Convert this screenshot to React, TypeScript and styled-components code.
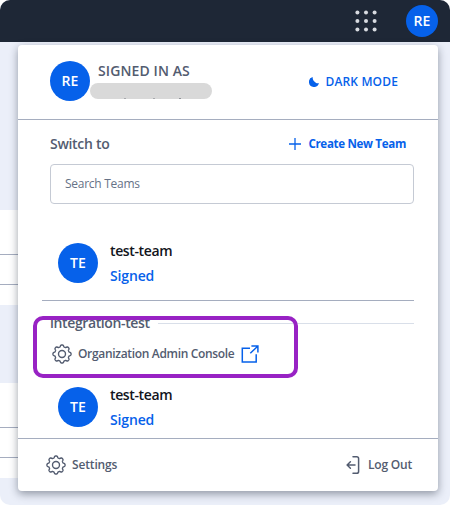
import React from 'react';
import styled, { createGlobalStyle } from 'styled-components';

const BLUE = '#0661ea';
const SLATE = '#535c70';
const LINE = '#a5adbf';

const GlobalStyle = createGlobalStyle`
  * { box-sizing: border-box; }
  body { margin: 0; background: #fff; }
`;

const Frame = styled.div`
  position: relative;
  width: 450px;
  height: 505px;
  overflow: hidden;
  border-radius: 10px;
  background: #ebeff9;
  font-family: 'Open Sans', 'Noto Sans', sans-serif;
  font-weight: 600;
`;

const TopBar = styled.header`
  display: flex;
  align-items: center;
  justify-content: flex-end;
  gap: 29px;
  height: 42px;
  padding-right: 12px;
  background: #1e2736;
`;

const Backdrop = styled.main`
  display: flex;
  flex-direction: column;
  gap: 78px;
  width: 300px;
  padding-top: 168px;
`;

const Card = styled.section`
  height: 95px;
  padding-top: 44px;
  background: #fff;
`;

const CardRow = styled.div`
  height: 30px;
  border-top: 1px solid ${LINE};
  &:last-child { height: 21px; }
`;

const Avatar = styled.div<{ $size: number }>`
  display: flex;
  flex: none;
  align-items: center;
  justify-content: center;
  width: ${(p) => p.$size}px;
  height: ${(p) => p.$size}px;
  border-radius: 50%;
  background: ${BLUE};
  color: #fff;
  font-size: 14px;
  letter-spacing: 0.2px;
  line-height: 20px;
`;

const Label = styled.span<{ $size?: number; $color?: string; $track?: number; $weight?: number }>`
  color: ${(p) => p.$color ?? SLATE};
  font-size: ${(p) => p.$size ?? 12}px;
  font-weight: ${(p) => p.$weight ?? 600};
  letter-spacing: ${(p) => p.$track ?? 0}px;
  line-height: 20px;
  white-space: nowrap;
`;

const Menu = styled.div`
  position: absolute;
  left: 18px;
  top: 45px;
  display: flex;
  flex-direction: column;
  width: 420px;
  height: 446px;
  border-radius: 4px;
  background: #fff;
  box-shadow: 0 3px 8px rgba(20, 28, 45, 0.42);
`;

const Account = styled.div`
  display: flex;
  height: 75px;
  padding: 16px 40px 0 32px;
  border-bottom: 1px solid ${LINE};
`;

const Identity = styled.div`
  display: flex;
  flex: 1;
  flex-direction: column;
  align-items: flex-start;
  & > span { margin-left: 8px; }
`;

const Redacted = styled.div`
  width: 122px;
  height: 16px;
  margin-top: 2px;
  border-radius: 8px;
  background: #d9d9d9;
`;

const Descenders = styled.svg`
  display: block;
  width: 122px;
  height: 16px;
`;

const Action = styled.button<{ $gap: number; $top?: number }>`
  display: flex;
  align-items: center;
  gap: ${(p) => p.$gap}px;
  height: 20px;
  margin: ${(p) => p.$top ?? 0}px 0 0;
  padding: 0;
  border: 0;
  background: none;
  font: inherit;
`;

const SwitchHead = styled.div`
  display: flex;
  justify-content: space-between;
  height: 44px;
  padding: 14px 32px 0;
`;

const Search = styled.div`
  display: flex;
  flex: none;
  align-items: center;
  height: 40px;
  margin: 0 24px 0 32px;
  padding-left: 14px;
  border: 1px solid #c5cad4;
  border-radius: 4px;
`;

const Team = styled.div<{ $top: number; $height: number; $line?: boolean }>`
  display: flex;
  gap: 12px;
  height: ${(p) => p.$height}px;
  margin: 0 24px;
  padding: ${(p) => p.$top}px 16px 0;
  border-bottom: ${(p) => (p.$line ? `1px solid ${LINE}` : '0')};
`;

const TeamText = styled.div`
  display: flex;
  flex-direction: column;
  gap: 5px;
  margin-top: -2px;
`;

const GroupHead = styled.div`
  display: flex;
  align-items: center;
  gap: 8px;
  height: 20px;
  margin: 12px 24px 0 32px;
  &::after {
    content: '';
    flex: 1;
    height: 1px;
    background: #d9dfe9;
  }
`;

const Console = styled.div`
  display: flex;
  align-items: center;
  height: 20px;
  margin: 11px 0 0 34px;
  & > span { width: 158px; margin: 0 5px 0 6px; }
`;

const Footer = styled.footer`
  display: flex;
  align-items: center;
  justify-content: space-between;
  height: 53px;
  padding: 0 26px 0 28px;
  border-top: 1px solid ${LINE};
`;

const Highlight = styled.div`
  position: absolute;
  left: 33px;
  top: 316px;
  width: 265px;
  height: 62px;
  border: 4px solid #9822c4;
  border-radius: 10px;
`;

const gearPath = (() => {
  const points: string[] = [];
  for (let i = 0; i < 160; i++) {
    const a = (i / 160) * Math.PI * 2;
    const r = 8.15 + 0.95 * Math.tanh(1.8 * Math.cos(8 * a));
    points.push(`${(10 + r * Math.sin(a)).toFixed(2)} ${(10 - r * Math.cos(a)).toFixed(2)}`);
  }
  return `M${points.join('L')}Z`;
})();

const Gear = () => (
  <svg width="20" height="20" viewBox="0 0 20 20" fill="none" stroke={SLATE} strokeWidth="1.4" strokeLinejoin="round">
    <path d={gearPath} />
    <circle cx="10" cy="10" r="3.5" />
  </svg>
);

const Apps = () => (
  <svg width="22" height="22" viewBox="0 0 22 22" fill="#d8dbe1">
    {[2.4, 11, 19.6].flatMap((y) => [2.4, 11, 19.6].map((x) => <circle key={`${x}-${y}`} cx={x} cy={y} r="2" />))}
  </svg>
);

const Moon = () => (
  <svg width="10" height="10" viewBox="0 0 10 10" fill={BLUE}>
    <path d="M3.7 0A5.1 5.1 0 1 0 10 6.1C8.2 6.6 6.7 6 6 5C4.5 4 3.4 2.4 3.7 0Z" />
  </svg>
);

const Plus = () => (
  <svg width="12" height="12" viewBox="0 0 12 12" fill="none" stroke={BLUE} strokeWidth="1.3">
    <path d="M6 0V12M0 6H12" />
  </svg>
);

const External = () => (
  <svg width="18" height="18" viewBox="0 0 18 18" fill="none" stroke={BLUE} strokeWidth="1.5">
    <path d="M9 3.2H1.3V16.9H15.2V9.2M10.4 1H16.9V7.4M16.7 1.2L9.3 8.2" />
  </svg>
);

const Exit = () => (
  <svg width="14" height="20" viewBox="0 0 14 20" fill="none" stroke={SLATE} strokeWidth="1.5" strokeLinecap="round" strokeLinejoin="round">
    <path d="M7 1.7H10.7Q12.6 1.7 12.6 3.6V16.4Q12.6 18.3 10.7 18.3H7M9 10H1.3M4.4 6.8L1.1 10L4.4 13.2" />
  </svg>
);

const TeamRow = (props: { top: number; height: number; line?: boolean }) => (
  <Team $top={props.top} $height={props.height} $line={props.line}>
    <Avatar $size={40}>TE</Avatar>
    <TeamText>
      <Label $size={14} $color="#12151c" $track={-0.38}>test-team</Label>
      <Label $size={14} $color={BLUE} $track={-0.15}>Signed</Label>
    </TeamText>
  </Team>
);

export default function App() {
  return (
    <>
      <GlobalStyle />
      <Frame>
        <TopBar>
          <Apps />
          <Avatar $size={32}>RE</Avatar>
        </TopBar>
        <Backdrop>
          <Card><CardRow /><CardRow /></Card>
          <Card><CardRow /><CardRow /></Card>
        </Backdrop>
        <Menu>
          <Account>
            <Avatar $size={40}>RE</Avatar>
            <Identity>
              <Label $size={14} $track={0.1}>SIGNED IN AS</Label>
              <Redacted>
                <Descenders viewBox="0 0 122 16" fill="#777b82">
                  <path d="M34 15.4H36V16H34ZM63 15.5H65V16H63ZM89 15.3H91V16H89Z" />
                </Descenders>
              </Redacted>
            </Identity>
            <Action $gap={6} $top={11}>
              <Moon />
              <Label $color={BLUE} $track={0.15}>DARK MODE</Label>
            </Action>
          </Account>
          <SwitchHead>
            <Label $size={14} $track={-0.3}>Switch to</Label>
            <Action $gap={7}>
              <Plus />
              <Label $color={BLUE} $size={11.6} $track={-0.33} $weight={700}>Create New Team</Label>
            </Action>
          </SwitchHead>
          <Search><Label $color="#667287" $track={-0.27} $weight={500}>Search Teams</Label></Search>
          <TeamRow top={39} height={97} line />
          <GroupHead><Label $size={14} $track={-0.38}>integration-test</Label></GroupHead>
          <Console>
            <Gear />
            <Label $track={-0.33}>Organization Admin Console</Label>
            <External />
          </Console>
          <TeamRow top={23} height={74} />
          <Footer>
            <Action $gap={6}><Gear /><Label $track={-0.15}>Settings</Label></Action>
            <Action $gap={8}><Exit /><Label $track={-0.2}>Log Out</Label></Action>
          </Footer>
        </Menu>
        <Highlight />
      </Frame>
    </>
  );
}
